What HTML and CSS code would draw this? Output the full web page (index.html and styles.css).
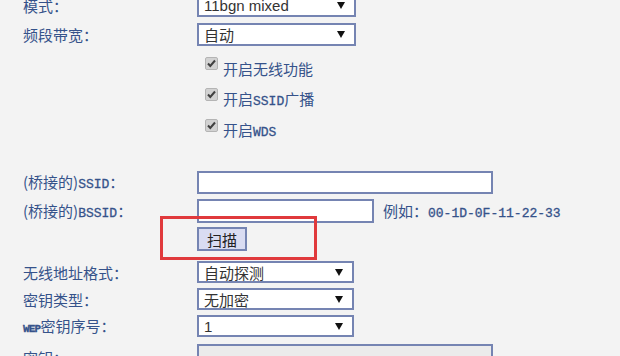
FILE: index.html
```html
<!DOCTYPE html>
<html lang="zh-CN">
<head>
<meta charset="utf-8">
<title>无线设置</title>
<link rel="stylesheet" href="styles.css">
</head>
<body>
<div class="form">
  <div class="row r-mode">
    <span class="lbl">模式：</span>
    <div class="ctl select w-wide"><span class="val sans">11bgn mixed</span><svg class="arr" width="8" height="7" viewBox="0 0 8 7"><path d="M0 0H8L4 7Z"/></svg></div>
  </div>
  <div class="row r-band">
    <span class="lbl">频段带宽：</span>
    <div class="ctl select w-wide"><span class="val">自动</span><svg class="arr" width="8" height="7" viewBox="0 0 8 7"><path d="M0 0H8L4 7Z"/></svg></div>
  </div>
  <div class="checks">
    <div class="chk"><span class="cb"><svg width="13" height="13" viewBox="0 0 13 13"><rect x="0.5" y="0.5" width="12" height="12" rx="1.5" fill="#d2d2d2" stroke="#b4b4b4"/><path d="M3 6.5L5.3 9L10 3.5" fill="none" stroke="#404040" stroke-width="2"/></svg></span><span>开启无线功能</span></div>
    <div class="chk"><span class="cb"><svg width="13" height="13" viewBox="0 0 13 13"><rect x="0.5" y="0.5" width="12" height="12" rx="1.5" fill="#d2d2d2" stroke="#b4b4b4"/><path d="M3 6.5L5.3 9L10 3.5" fill="none" stroke="#404040" stroke-width="2"/></svg></span><span>开启<span class="mono">SSID</span>广播</span></div>
    <div class="chk"><span class="cb"><svg width="13" height="13" viewBox="0 0 13 13"><rect x="0.5" y="0.5" width="12" height="12" rx="1.5" fill="#d2d2d2" stroke="#b4b4b4"/><path d="M3 6.5L5.3 9L10 3.5" fill="none" stroke="#404040" stroke-width="2"/></svg></span><span>开启<span class="mono">WDS</span></span></div>
  </div>
  <div class="row r-ssid">
    <span class="lbl">(桥接的)<span class="mono">SSID</span>：</span>
    <div class="ctl input w-full"></div>
  </div>
  <div class="row r-bssid">
    <span class="lbl">(桥接的)<span class="mono">BSSID</span>：</span>
    <div class="ctl input w-mid"></div>
    <span class="hint">例如：<span class="mono">00-1D-0F-11-22-33</span></span>
  </div>
  <div class="row r-btn">
    <span class="lbl"></span>
    <button class="btn" type="button">扫描</button>
  </div>
  <div class="row r-sel1">
    <span class="lbl">无线地址格式：</span>
    <div class="ctl select w-sel"><span class="val">自动探测</span><svg class="arr" width="8" height="7" viewBox="0 0 8 7"><path d="M0 0H8L4 7Z"/></svg></div>
  </div>
  <div class="row r-sel2">
    <span class="lbl">密钥类型：</span>
    <div class="ctl select w-sel"><span class="val">无加密</span><svg class="arr" width="8" height="7" viewBox="0 0 8 7"><path d="M0 0H8L4 7Z"/></svg></div>
  </div>
  <div class="row r-sel3">
    <span class="lbl"><span class="mono small">WEP</span>密钥序号：</span>
    <div class="ctl select w-sel"><span class="val sans">1</span><svg class="arr" width="8" height="7" viewBox="0 0 8 7"><path d="M0 0H8L4 7Z"/></svg></div>
  </div>
  <div class="row r-key">
    <span class="lbl">密钥：</span>
    <div class="ctl input disabled w-full"></div>
  </div>
  <div class="mark"></div>
</div>
</body>
</html>
```
FILE: styles.css
```css
html, body {
  margin: 0;
  background: #f3f3f3;
}
body {
  font-family: "Noto Sans CJK SC", "Noto Sans", sans-serif;
  font-size: 15px;
  color: #35528a;
  overflow: hidden;
}
.form {
  position: relative;
  margin-top: -6px;
  padding-left: 23px;
}
.row {
  display: flex;
  align-items: center;
}
.lbl {
  width: 174px;
  flex: none;
  white-space: nowrap;
  line-height: 1;
}
.mono {
  font-family: "Liberation Mono", "DejaVu Sans Mono", monospace;
  font-size: 13px;
  font-weight: normal;
  -webkit-text-stroke: 0.3px #35528a;
}
.mono.small {
  font-size: 11px;
  font-weight: bold;
  letter-spacing: -0.8px;
}
.sans {
  font-family: "Liberation Sans", Arial, sans-serif;
}
.ctl {
  box-sizing: border-box;
  border: 2px solid #7584b2;
  background: #fff;
  flex: none;
}
.select {
  display: flex;
  align-items: center;
  justify-content: space-between;
  padding: 0 9px 0 5px;
  color: #333;
  font-size: 15px;
  line-height: 1;
}
.select .arr {
  fill: #111;
}
.w-wide { width: 159px; height: 23px; }
.w-sel { width: 157px; height: 22px; }
.w-full { width: 296px; height: 23px; }
.w-mid { width: 177px; height: 24px; }
.disabled {
  background: #ebebeb;
  height: 26px;
}
.r-mode { height: 23px; }
.r-band { margin-top: 6px; height: 23px; }
.checks {
  margin-top: 7px;
  padding-left: 182px;
}
.chk {
  display: flex;
  align-items: center;
  gap: 5px;
  height: 31px;
  line-height: 1;
}
.cb {
  display: flex;
  margin-top: -10px;
}
.r-ssid { margin-top: 25px; }
.r-bssid { margin-top: 5px; }
.hint {
  margin-left: 9px;
  line-height: 1;
}
.r-btn { margin-top: 4px; }
.btn {
  box-sizing: border-box;
  width: 50px;
  height: 24px;
  margin: 0;
  padding: 0;
  border: 2px solid #7584b2;
  background: #d9dcf2;
  color: #222;
  font-family: "Noto Sans CJK SC", sans-serif;
  font-size: 15px;
  line-height: 1;
}
.r-sel1 { margin-top: 10px; }
.r-sel2 { margin-top: 5px; }
.r-sel3 { margin-top: 5px; }
.r-key { margin-top: 7px; }
.mark {
  position: absolute;
  left: 160px;
  top: 222px;
  width: 157px;
  height: 44px;
  box-sizing: border-box;
  border: 3px solid #e0393c;
}
```
